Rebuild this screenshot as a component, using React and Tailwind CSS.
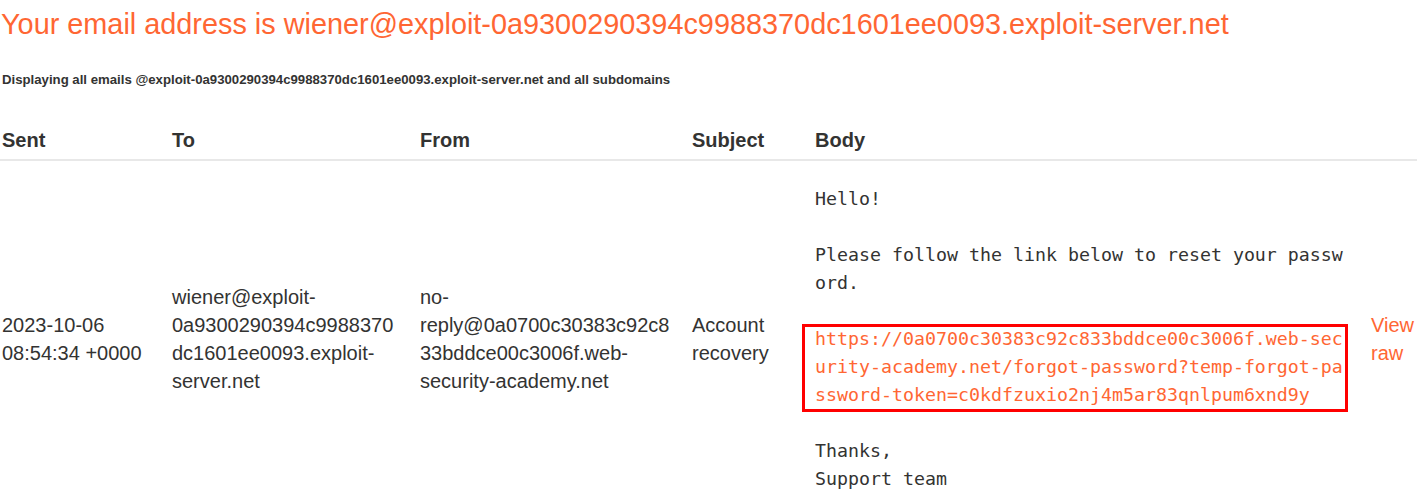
const email = 'wiener@exploit-0a9300290394c9988370dc1601ee0093.exploit-server.net';
const link =
  'https://0a0700c30383c92c833bddce00c3006f.web-security-academy.net/forgot-password?temp-forgot-password-token=c0kdfzuxio2nj4m5ar83qnlpum6xnd9y';

const headers = ['Sent', 'To', 'From', 'Subject', 'Body', ''];

const App = () => {
  return (
    <div className="min-h-screen bg-white text-[#333332] font-['Liberation_Sans',Arial,sans-serif] overflow-hidden">
      <h1 className="mt-[8px] pl-[1px] text-[28.85px] leading-[32px] font-normal text-[#ff6633] whitespace-nowrap">
        Your email address is {email}
      </h1>
      <h4 className="mt-[32px] pl-[2px] text-[13.2px] leading-[16px] font-bold whitespace-nowrap">
        Displaying all emails @exploit-0a9300290394c9988370dc1601ee0093.exploit-server.net and all subdomains
      </h4>

      <div className="mt-[38px] grid grid-cols-[170px_248px_272px_123px_556px_1fr] text-[20px] leading-[28px]">
        {headers.map((h, i) => (
          <div key={i} className="pl-[2px] pb-[5px] font-bold border-b-[2px] border-[#e8e8e8]">
            {h}
          </div>
        ))}

        <div className="self-center pl-[2px] pr-[18px]">2023-10-06 08:54:34 +0000</div>
        <div className="self-center pl-[2px] pr-[18px] break-words">{email}</div>
        <div className="self-center pl-[2px] pr-[18px] break-words">
          no-reply@0a0700c30383c92c833bddce00c3006f.web-security-academy.net
        </div>
        <div className="self-center pl-[2px] pr-[18px]">Account recovery</div>
        <div className="pl-[2px] pr-[18px] pt-[24px] pb-[23px]">
          <pre className="m-0 whitespace-pre-wrap break-all font-['DejaVu_Sans_Mono',monospace] text-[18.27px] leading-[28px]">
            {'Hello!\n\nPlease follow the link below to reset your password.\n\n'}
            <a href="#" className="relative block text-[#ff6633] no-underline">
              {link}
              <span className="absolute -left-[13px] -top-[1px] w-[546px] h-[88px] border-[3px] border-[#ff0000] pointer-events-none" />
            </a>
            {'\nThanks,\nSupport team'}
          </pre>
        </div>
        <div className="self-center pl-[2px]">
          <a href="#" className="text-[#ff6633]">View raw</a>
        </div>
      </div>
    </div>
  );
};

export default App;
